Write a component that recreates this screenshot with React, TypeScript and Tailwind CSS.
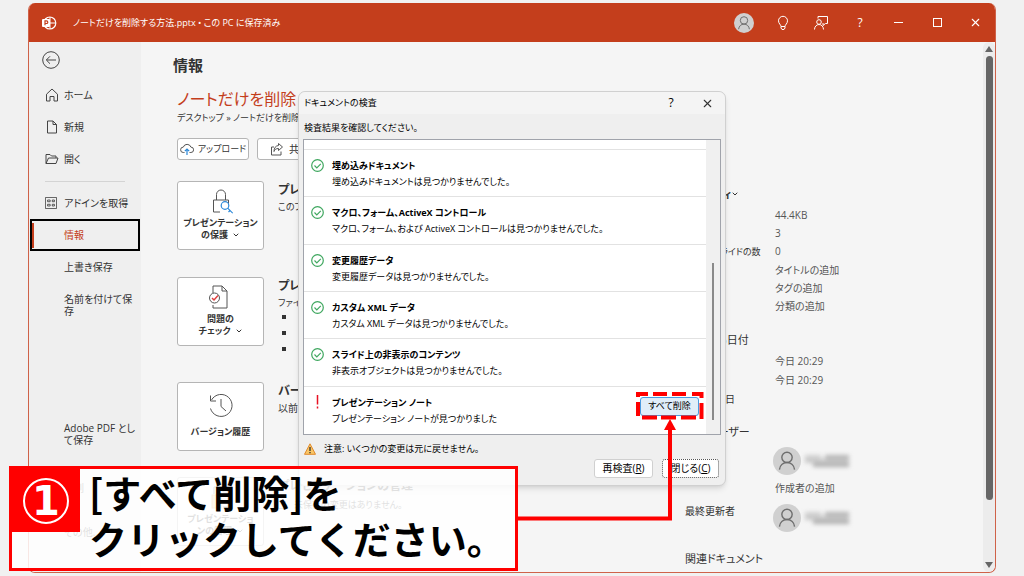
import React from 'react';
import { ChevronDown, X } from 'lucide-react';

interface CheckResult {
  title: string;
  detail: string;
  found?: boolean;
}

const results: CheckResult[] = [
  { title: '埋め込みドキュメント', detail: '埋め込みドキュメントは見つかりませんでした。' },
  {
    title: 'マクロ、フォーム、ActiveX コントロール',
    detail: 'マクロ、フォーム、および ActiveX コントロールは見つかりませんでした。',
  },
  { title: '変更履歴データ', detail: '変更履歴データは見つかりませんでした。' },
  { title: 'カスタム XML データ', detail: 'カスタム XML データは見つかりませんでした。' },
  { title: 'スライド上の非表示のコンテンツ', detail: '非表示オブジェクトは見つかりませんでした。' },
  { title: 'プレゼンテーション ノート', detail: 'プレゼンテーション ノートが見つかりました', found: true },
];

const properties = [
  ['', '44.4KB'],
  ['', '3'],
  ['非表示スライドの数', '0'],
  ['', 'タイトルの追加'],
  ['', 'タグの追加'],
  ['', '分類の追加'],
];

const dates = [
  ['', '今日 20:29'],
  ['', '今日 20:29'],
  ['最終印刷日', ''],
];

function PersonIcon({ className }: { className?: string }) {
  return (
    <svg viewBox="0 0 20 20" fill="none" stroke="currentColor" className={className}>
      <circle cx="10" cy="7.4" r="3.7" />
      <path d="M4.6 16.2c.3-3 2.5-5.1 5.4-5.1s5.1 2.1 5.4 5.1" />
    </svg>
  );
}

function Avatar({ className }: { className: string }) {
  return (
    <span className={`flex items-center justify-center rounded-full bg-[#d0d0d0] text-[#6e6e6e] ${className}`}>
      <PersonIcon className="h-full w-full" />
    </span>
  );
}

// Name kept unreadable on purpose
function HiddenName() {
  return (
    <span className="flex h-[13px] w-11 flex-col blur-[2px]">
      <span className="flex flex-1 gap-1">
        <span className="w-4 bg-[#cfcfcf]" />
        <span className="flex-1 bg-[#b4b4b4]" />
      </span>
      <span className="flex-1 bg-[#c8c8c8]" />
      <span className="ml-2 flex-1 bg-[#b0b0b0]" />
    </span>
  );
}

function TitleBar() {
  const cell = 'flex h-full items-center justify-center';
  return (
    <header className="flex h-[39px] shrink-0 items-center bg-[#c43e1c] text-white">
      <svg viewBox="0 0 16 16" className="ml-3 h-4 w-4 shrink-0" fill="none" stroke="white">
        <circle cx="8.8" cy="8" r="6" strokeWidth="1.2" />
        <path d="M9 2v6h6M9 8v6" strokeWidth="1" />
        <rect x="1" y="4" width="8" height="8" rx="1" fill="white" stroke="none" />
        <path d="M4 10.2V5.9h1.5a1.3 1.3 0 0 1 0 2.6H4" stroke="#c43e1c" strokeWidth="1.2" />
      </svg>
      <span className="ml-4 pt-px text-[9px] whitespace-nowrap">ノートだけを削除する方法.pptx • この PC に保存済み</span>
      <div className="ml-auto grid h-full w-[270px] grid-cols-7">
        <button className={cell} aria-label="アカウント">
          <Avatar className="h-5 w-5" />
        </button>
        <button className={cell} aria-label="ヒント">
          <svg viewBox="0 0 12 16" className="h-4 w-3" fill="none" stroke="white">
            <path d="M4 11.5c0-1.8-2.5-2.8-2.5-5.7a4.5 4.5 0 0 1 9 0c0 2.9-2.5 3.9-2.5 5.7zM4 11.5v1.5l1 1.5h2l1-1.5v-1.5" />
          </svg>
        </button>
        <button className={cell} aria-label="フィードバック">
          <svg viewBox="0 0 16 16" className="h-4 w-4" fill="none" stroke="white">
            <path d="M5 3.5V1.5h9.500v7h-2L10 10.500V8" />
            <circle cx="6" cy="7" r="2.3" />
            <path d="M1.5 14.5c0-2.800 2-5 4.500-5s4.500 2.200 4.500 5" />
          </svg>
        </button>
        <button className={`${cell} text-[12px]`}>?</button>
        <button className={cell} aria-label="最小化">
          <svg viewBox="0 0 9 9" className="h-[9px] w-[9px]" stroke="white">
            <path d="M0 4.500h9" />
          </svg>
        </button>
        <button className={cell} aria-label="最大化">
          <span className="h-[9px] w-[9px] border border-white" />
        </button>
        <button className={cell} aria-label="閉じる">
          <X className="h-[13px] w-[13px]" strokeWidth={2} />
        </button>
      </div>
    </header>
  );
}

function NavItem({ label, icon }: { label: string; icon?: React.ReactNode }) {
  return (
    <a href="#" className="flex min-h-8 items-center pr-2 pl-4 leading-3">
      <span className="w-[19px] shrink-0">{icon}</span>
      <span>{label}</span>
    </a>
  );
}

function Sidebar() {
  const icon = 'h-[14px] w-[14px]';
  return (
    <nav className="flex w-28 shrink-0 flex-col bg-[#efefef]">
      <button className="mt-[9px] ml-[13px] flex h-[18px] w-[18px] items-center justify-center" aria-label="戻る">
        <svg viewBox="0 0 18 18" className="h-[18px] w-[18px]" fill="none" stroke="#444">
          <circle cx="9" cy="9" r="8.3" />
          <path d="M14 9H4.500M8 5.300 4.300 9 8 12.700" />
        </svg>
      </button>
      <div className="mt-[10px]">
        <NavItem
          label="ホーム"
          icon={
            <svg viewBox="0 0 14 14" className={icon} fill="none" stroke="#444">
              <path d="M1.500 6.200 7 1l5.500 5.200V13H9V8.500H5V13H1.500z" strokeLinejoin="round" />
            </svg>
          }
        />
        <NavItem
          label="新規"
          icon={
            <svg viewBox="0 0 14 14" className={icon} fill="none" stroke="#444">
              <path d="M2.500 1h5.500l3.500 3.500V13h-9zM8 1v3.500h3.500" />
            </svg>
          }
        />
        <NavItem
          label="開く"
          icon={
            <svg viewBox="0 0 14 14" className={icon} fill="none" stroke="#444">
              <path d="M1 11.500V2.500h4l1.500 1.500h4.500v2M1 11.500 3.500 6h9.500l-2 5.500z" />
            </svg>
          }
        />
      </div>
      <hr className="mx-4 mt-[6px] mb-[5px] border-[#d4d4d4]" />
      <NavItem
        label="アドインを取得"
        icon={
          <svg viewBox="0 0 14 14" className="h-3 w-3" fill="none" stroke="#444">
            <path d="M.5.5h13v13H.5zM3 3.500h3v2H3zM8.500 3.500h2.500v2H8.500zM3 8.500h3v2H3zM8.500 8.500h2.500v2H8.500z" />
          </svg>
        }
      />
      <a href="#" className="mx-px flex h-8 items-center border-2 border-black text-[#c43e1c]">
        <span className="h-[25px] w-[2px] bg-[#c43e1c]" />
        <span className="ml-[30px]">情報</span>
      </a>
      <NavItem label="上書き保存" />
      <a href="#" className="py-[10px] pr-2 pl-[35px] leading-3">
        名前を付けて保存
      </a>
      <div className="mt-auto flex flex-col pb-6 leading-3">
        <a href="#" className="pr-1 pl-[35px]">
          Adobe PDF として保存
        </a>
        <a href="#" className="mt-9 pl-[35px]">
          印刷
        </a>
        <a href="#" className="mt-8 mb-[10px] pl-[35px]">
          その他...
        </a>
      </div>
    </nav>
  );
}

interface TileProps {
  lines: string[];
  menu?: boolean;
  icon: React.ReactNode;
}

function Tile({ lines, menu, icon }: TileProps) {
  return (
    <button className="flex h-[69px] w-[87px] shrink-0 flex-col items-center justify-center rounded-[3px] border border-[#b5b5b5] bg-white pb-[2px] text-[9px] leading-3 font-bold whitespace-nowrap">
      {icon}
      {lines.map((line, i) => (
        <span key={line} className="flex items-center gap-1">
          {line}
          {menu && i === lines.length - 1 && <ChevronDown className="h-2 w-2" strokeWidth={3} />}
        </span>
      ))}
    </button>
  );
}

function InfoSection({ tile, title, children }: { tile: React.ReactNode; title: string; children?: React.ReactNode }) {
  return (
    <section className="flex h-[69px] gap-[14px] whitespace-nowrap">
      {tile}
      <div>
        <h3 className="text-[12px] leading-[18px] font-bold">{title}</h3>
        {children}
      </div>
    </section>
  );
}

function InfoPage() {
  const tileIcon = 'mb-[2px] h-[26px] w-6';
  return (
    <main className="min-w-0 flex-1 overflow-hidden pt-3 pl-8">
      <h1 className="text-[15px] leading-[22px] font-bold">情報</h1>
      <div className="pl-1">
        <h2 className="mt-3 text-[16px] leading-[22px] whitespace-nowrap text-[#c43e1c]">ノートだけを削除</h2>
        <p className="text-[9px] leading-4">デスクトップ » ノートだけを削除</p>
        <div className="mt-3 flex gap-2">
          <button className="flex h-[22px] w-[72px] items-center justify-center gap-1 rounded-[3px] border border-[#b5b5b5] bg-white text-[9px] whitespace-nowrap">
            <svg viewBox="0 0 14 12" className="h-3 w-[14px] shrink-0" fill="none" stroke="#555">
              <path d="M4.500 9.500H3.300a2.700 2.700 0 0 1 0-5.400 4 4 0 0 1 7.600 0 2.700 2.700 0 0 1 0 5.400H9.500" />
              <path d="M7 12V6M4.800 8.200 7 6l2.200 2.200" stroke="#2b88d8" strokeWidth="1.2" />
            </svg>
            アップロード
          </button>
          <button className="flex h-[22px] w-[72px] items-center gap-[5px] rounded-[3px] border border-[#b5b5b5] bg-white pl-3">
            <svg viewBox="0 0 14 14" className="h-[14px] w-[14px]" fill="none" stroke="#555">
              <path d="M4 5H1.500v8h9.500V9.500M8.500 1.500 12.500 5l-4 3.500v-2C6 6.500 4.700 7.500 4 9.500c0-3.500 1.500-5.700 4.500-6z" />
            </svg>
            共
          </button>
        </div>

        <div className="mt-[21px] flex">
          <div className="w-[508px] shrink-0">
            <InfoSection
              title="プレ"
              tile={
                <Tile
                  lines={['プレゼンテーション', 'の保護']}
                  menu
                  icon={
                    <svg viewBox="0 0 24 26" className={tileIcon} fill="none" stroke="#555">
                      <path d="M11 23H4.500V11h15v4M7.500 11V5.500a4.500 4.500 0 0 1 9 0V11" />
                      <g stroke="#2b88d8" strokeWidth="1.2">
                        <circle cx="16" cy="16.500" r="3.8" fill="white" />
                        <path d="m18.700 19.200 5 5M21 21.500l-1.500 1.500" />
                      </g>
                    </svg>
                  }
                />
              }
            >
              <p className="text-[9px] leading-4">このフ</p>
            </InfoSection>
            <div className="mt-[27px]">
              <InfoSection
                title="プレ"
                tile={
                  <Tile
                    lines={['問題の', 'チェック']}
                    menu
                    icon={
                      <svg viewBox="0 0 24 26" className={tileIcon} fill="none" stroke="#555">
                        <path d="M4 8V1h9l5 5v17H4v-3M13 1v5h5" />
                        <circle cx="5.500" cy="13" r="5" fill="white" />
                        <path d="m3 13 2 2 4-4.500" stroke="#e04040" strokeWidth="1.5" />
                      </svg>
                    }
                  />
                }
              >
                <p className="text-[9px] leading-4">ファイ</p>
                <ul className="flex flex-col gap-3 pt-1 pl-1">
                  <li className="h-1 w-1 bg-[#333]" />
                  <li className="h-1 w-1 bg-[#333]" />
                  <li className="h-1 w-1 bg-[#333]" />
                </ul>
              </InfoSection>
            </div>
            <div className="mt-9">
              <InfoSection
                title="バー"
                tile={
                  <Tile
                    lines={['バージョン履歴']}
                    icon={
                      <svg viewBox="0 0 24 24" className="mb-2 h-6 w-6" fill="none" stroke="#555">
                        <path d="M1.500 14.500A11 11 0 1 0 2.500 6M1.500 1.500v5.500H7M12 5v7.500l5 4.500" />
                      </svg>
                    }
                  />
                }
              >
                <p className="leading-4">以前</p>
              </InfoSection>
            </div>
            <div className="mt-[26px]">
              <InfoSection
                title="プレゼンテーションの管理"
                tile={
                  <Tile
                    lines={['プレゼンテーショ', 'ンの管理']}
                    menu
                    icon={
                      <svg viewBox="0 0 24 26" className={tileIcon} fill="none" stroke="#555">
                        <path d="M5 9V2h9l5 5v15h-5M14 2v5h5" />
                        <rect x="3" y="10" width="9" height="13" fill="#f0c070" stroke="#d89030" />
                      </svg>
                    }
                  />
                }
              >
                <p className="flex items-center gap-2 text-[9px] leading-5">
                  <span className="h-2 w-2 border border-[#777]" />
                  未保存の変更はありません。
                </p>
              </InfoSection>
            </div>
          </div>

          <div className="w-[220px] shrink-0">
            <h3 className="mt-px flex items-center text-[10px] leading-[24px] font-bold">
              プロパティ <ChevronDown className="h-2 w-2" strokeWidth={3} />
            </h3>
            <dl className="grid h-[110px] auto-rows-fr items-center whitespace-nowrap">
              {properties.map(([label, value]) => (
                <div key={value} className="grid grid-cols-[90px_1fr] items-center">
                  <dt className="text-[9px]">{label}</dt>
                  <dd className="text-[#555]">{value}</dd>
                </div>
              ))}
            </dl>
            <h3 className="mt-3 text-[11px] leading-6">関連する日付</h3>
            <dl className="grid h-[57px] auto-rows-fr items-center whitespace-nowrap">
              {dates.map(([label, value], i) => (
                <div key={i} className="grid grid-cols-[90px_1fr]">
                  <dt>{label}</dt>
                  <dd className="text-[#555]">{value}</dd>
                </div>
              ))}
            </dl>
            <h3 className="mt-3 text-[11px] leading-[22px]">関連ユーザー</h3>
            <div className="mt-1 ml-[88px]">
              <div className="flex items-center gap-1">
                <Avatar className="h-7 w-7" />
                <HiddenName />
              </div>
              <a href="#" className="mt-[5px] ml-[2px] block leading-4 text-[#555]">
                作成者の追加
              </a>
            </div>
            <div className="mt-2 grid grid-cols-[88px_1fr]">
              <span>最終更新者</span>
              <div className="flex items-center gap-1">
                <Avatar className="h-7 w-7" />
                <HiddenName />
              </div>
            </div>
            <h3 className="mt-4 text-[11px] leading-[22px]">関連ドキュメント</h3>
          </div>
        </div>
      </div>
    </main>
  );
}

function InspectorDialog() {
  return (
    <div
      role="dialog"
      aria-label="ドキュメントの検査"
      className="absolute top-[91px] left-[298px] flex h-[395px] w-[428px] flex-col rounded-[7px] border border-[#d0d0d0] bg-[#efefef] text-[9px] text-black shadow-md"
    >
      <div className="flex h-[22px] items-center rounded-t-[7px] bg-[#f4f4f4] pl-[5px]">
        <span>ドキュメントの検査</span>
        <button className="ml-auto w-9 text-center text-[12px]">?</button>
        <button className="flex w-9 justify-center" aria-label="閉じる">
          <X className="h-[13px] w-[13px] text-[#333]" strokeWidth={2} />
        </button>
      </div>
      <p className="pt-[6px] pl-[5px] leading-4">検査結果を確認してください。</p>
      <div className="mx-1 mt-[3px] flex h-[296px] border border-[#a0a3ab] bg-white">
        <ul className="flex min-w-0 flex-1 flex-col pt-[9px] pb-px">
          {results.map((r) => (
            <li key={r.title} className="flex flex-1 border-t border-[#e2e2e2] pt-2 pl-[7px]">
              {r.found ? (
                <svg viewBox="0 0 13 14" className="h-[14px] w-[13px] shrink-0" stroke="#e81123" strokeWidth="1.5">
                  <path d="M6.500 0v9.500M6.500 11.500v2" />
                </svg>
              ) : (
                <svg viewBox="0 0 13 13" className="mt-px h-[13px] w-[13px] shrink-0" fill="none" stroke="#3fa75f" strokeWidth="1.2">
                  <circle cx="6.500" cy="6.500" r="5.8" />
                  <path d="m3.500 6.500 2.300 2.300 4-4" />
                </svg>
              )}
              <div className="ml-2 min-w-0 flex-1 leading-4 whitespace-nowrap">
                <h4 className="font-bold">{r.title}</h4>
                <p>{r.detail}</p>
              </div>
              {r.found && (
                <button className="mt-[2px] mr-[7px] h-[19px] w-[59px] rounded-[3px] border border-[#4a9be0] bg-[#e0eef9] whitespace-nowrap">
                  すべて削除
                </button>
              )}
            </li>
          ))}
        </ul>
        <div className="flex w-[14px] justify-center bg-[#f0f0f0] pt-[123px]">
          <span className="h-[157px] w-[2px] bg-[#8a8a8a]" />
        </div>
      </div>
      <p className="mt-[6px] flex items-center gap-2 pl-[5px] leading-4">
        <svg viewBox="0 0 12 12" className="h-3 w-3">
          <path d="M6 .8 11.500 11.300H.5z" fill="#f9c667" stroke="#e08a2c" strokeLinejoin="round" />
          <path d="M6 4v4M6 9v1.300" stroke="#222" strokeWidth="1.2" />
        </svg>
        注意: いくつかの変更は元に戻せません。
      </p>
      <div className="mt-[2px] flex justify-end gap-[9px] pr-[6px] text-[10px]">
        <button className="h-[19px] w-[59px] rounded-[3px] border border-[#d0d0d0] bg-white whitespace-nowrap">
          再検査(<u>R</u>)
        </button>
        <button className="h-[19px] w-[57px] rounded-[3px] border border-dotted border-[#555] bg-white whitespace-nowrap">
          閉じる(<u>C</u>)
        </button>
      </div>
    </div>
  );
}

function Callout() {
  return (
    <>
      {/* dashed frame round the button and the line leading to it */}
      <svg viewBox="0 0 190 132" className="absolute top-[391px] left-[516px] h-[132px] w-[190px]" fill="none" stroke="#ff0000">
        <path d="M120 3h12M137 3h14M156 3h14M176 3h11M126 26.500h15M145 26.500h15M165 26.500h15" strokeWidth="4" />
        <path d="M122 1v5M122 11v14M185.500 1v6M185.500 12v16" strokeWidth="4" />
        <path d="M0 127.500H154V36" strokeWidth="4" />
        <path d="m154 28 6 11h-12z" fill="#ff0000" stroke="none" />
      </svg>
      <div className="absolute top-[466px] left-[9px] flex h-[105px] w-[509px] border-3 border-[#ff0000] bg-white/85 text-black">
        <span className="flex h-[63px] w-[68px] shrink-0 items-center justify-center bg-[#ff0000]">
          <span className="flex h-[46px] w-[46px] items-center justify-center rounded-full border-2 border-white font-['DejaVu_Sans',sans-serif] text-[40px] leading-none font-bold text-white">
            1
          </span>
        </span>
        <p className="pl-[9px] font-['Noto_Sans_CJK_JP',sans-serif] text-[38px] leading-[46px] font-bold whitespace-nowrap [font-feature-settings:normal]">
          [すべて削除]を
          <br />
          クリックしてください。
        </p>
      </div>
    </>
  );
}

export default function App() {
  return (
    <div className="relative flex h-screen flex-col overflow-hidden bg-[#f1f1f1] px-7 py-[3px] font-['Open_Sans','Noto_Sans_CJK_JP',sans-serif] text-[10px] text-[#333] [font-feature-settings:'palt']">
      <div className="flex min-h-0 flex-1 flex-col overflow-hidden rounded-[7px] border border-t-0 border-[#cf6249] bg-[#f5f5f5]">
        <TitleBar />
        <div className="flex min-h-0 flex-1">
          <Sidebar />
          <InfoPage />
          <div className="flex w-3 shrink-0 flex-col items-center rounded-lg bg-[#ececec] py-1">
            <svg viewBox="0 0 8 6" className="h-[6px] w-2" fill="#666">
              <path d="M4 0 8 6H0z" />
            </svg>
            <span className="mt-1 mb-[62px] w-[7px] flex-1 rounded-full bg-[#666]" />
            <svg viewBox="0 0 8 6" className="h-[6px] w-2" fill="#666">
              <path d="M4 6 0 0h8z" />
            </svg>
          </div>
        </div>
      </div>
      <InspectorDialog />
      <Callout />
    </div>
  );
}
